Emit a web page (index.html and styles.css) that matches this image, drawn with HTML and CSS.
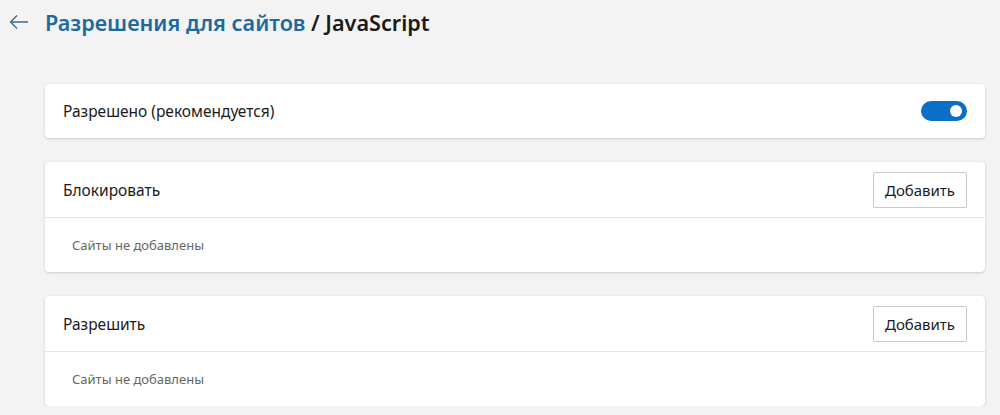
FILE: index.html
```html
<!DOCTYPE html>
<html lang="ru">
<head>
<meta charset="utf-8">
<link rel="stylesheet" href="styles.css">
</head>
<body>
<header class="page-header">
  <button class="back" aria-label="Назад">
    <svg width="20" height="16" viewBox="0 0 20 16"><path d="M8 1.5 L1.5 8 L8 14.5 M1.5 8 H19" fill="none" stroke="#3f6b8c" stroke-width="1.3"/></svg>
  </button>
  <h1 class="title"><span class="crumb">Разрешения для сайтов</span> / JavaScript</h1>
</header>
<main class="content">
  <section class="card row">
    <span class="label">Разрешено (рекомендуется)</span>
    <span class="toggle"><span class="knob"></span></span>
  </section>
  <section class="card">
    <div class="card-head">
      <span class="label">Блокировать</span>
      <button class="add">Добавить</button>
    </div>
    <div class="card-body">Сайты не добавлены</div>
  </section>
  <section class="card">
    <div class="card-head">
      <span class="label">Разрешить</span>
      <button class="add">Добавить</button>
    </div>
    <div class="card-body">Сайты не добавлены</div>
  </section>
</main>
</body>
</html>
```
FILE: styles.css
```css
html, body {
  margin: 0;
  padding: 0;
  background: #f3f3f3;
  font-family: "Noto Sans", "Open Sans", sans-serif;
  color: #1b1b1b;
}
.page-header {
  display: flex;
  align-items: center;
  height: 48px;
  padding-left: 9px;
}
.back {
  border: none;
  background: none;
  padding: 0;
  width: 20px;
  height: 16px;
  margin-right: 16px;
  margin-top: -4px;
  display: flex;
}
.title {
  margin: 0;
  font-size: 21.6px;
  font-weight: 600;
  color: #1b1b1b;
  margin-top: -3px;
}
.crumb {
  color: #1c6aa0;
}
.content {
  padding: 36px 15px 0 45px;
  display: flex;
  flex-direction: column;
  gap: 24px;
}
.card {
  background: #fff;
  border-radius: 4px;
  box-shadow: 0 1px 3px rgba(0,0,0,0.16), 0 0 1px rgba(0,0,0,0.08);
}
.row {
  height: 54px;
  display: flex;
  align-items: center;
  justify-content: space-between;
  padding: 0 18px;
}
.label {
  font-size: 15.5px;
  color: #1b1b1b;
}
.toggle {
  width: 46px;
  height: 20px;
  border-radius: 10px;
  background: #0b6fc6;
  display: flex;
  align-items: center;
  justify-content: flex-end;
  padding-right: 5px;
  box-sizing: border-box;
}
.knob {
  width: 12px;
  height: 12px;
  border-radius: 50%;
  background: #fff;
}
.card-head {
  height: 55px;
  display: flex;
  align-items: center;
  justify-content: space-between;
  padding: 0 18px;
  border-bottom: 1px solid #e5e5e5;
}
.add {
  width: 94px;
  height: 36px;
  border: 1px solid #c8c8c8;
  border-radius: 2px;
  background: #fff;
  font-family: inherit;
  font-size: 15px;
  color: #1b1b1b;
  padding: 0;
}
.card-body {
  height: 54px;
  display: flex;
  align-items: center;
  padding-left: 27px;
  font-size: 13px;
  color: #666;
}
```
